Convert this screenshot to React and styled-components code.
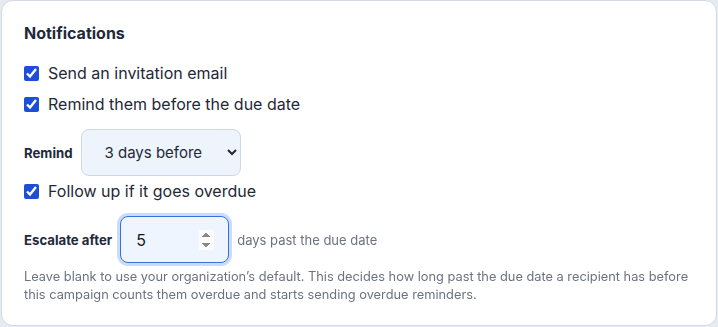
import React, { useState } from 'react';
import styled, { createGlobalStyle } from 'styled-components';

const Global = createGlobalStyle`
  html, body { margin: 0; padding: 0; background: #e6ebf2; }
  body { font-family: Inter, "Noto Sans", sans-serif; }
  * { box-sizing: border-box; }
`;

const Page = styled.div`
  width: 718px;
  height: 327px;
  padding: 0 1px 1px 1px;
`;

const Card = styled.section`
  height: 100%;
  background: #fff;
  border: 1px solid #d3dae5;
  border-radius: 12px;
  padding: 22px 22px 0 22px;
  display: flex;
  flex-direction: column;
`;

const Heading = styled.h2`
  margin: 0 0 18px 0;
  font-size: 16px;
  line-height: 20px;
  font-weight: 700;
  color: #1e293b;
`;

const CheckRow = styled.label`
  display: flex;
  align-items: center;
  gap: 9px;
  height: 24px;
  margin-top: ${p => p.$top || 0}px;
  font-size: 16px;
  color: #1f2937;
  cursor: pointer;
`;

const Check = styled.input.attrs({ type: 'checkbox' })`
  width: 15px;
  height: 15px;
  margin: 0;
  accent-color: #1d4ed8;
`;

const FieldRow = styled.div`
  display: flex;
  align-items: center;
  gap: 8px;
  margin-top: ${p => p.$top || 0}px;
`;

const FieldLabel = styled.label`
  font-size: 13.2px;
  font-weight: 700;
  color: #1e293b;
`;

const Select = styled.select`
  width: 160px;
  height: 47px;
  padding: 0 10px 0 19px;
  font-family: inherit;
  font-size: 15px;
  color: #1f2937;
  background: #eef4fc;
  border: 1px solid #cfd8e4;
  border-radius: 8px;
`;

const NumberInput = styled.input.attrs({ type: 'number' })`
  width: 109px;
  height: 47px;
  padding: 0 14px 0 15px;
  font-family: inherit;
  font-size: 16px;
  color: #111827;
  background: #eef5ff;
  border: 1.5px solid ${p => (p.$active ? '#3b6fd6' : '#cfd8e4')};
  border-radius: 8px;
  box-shadow: ${p => (p.$active ? '0 0 0 3px #c9dcfb' : 'none')};
  outline: none;
`;

const Suffix = styled.span`
  font-size: 13px;
  color: #6b7280;
`;

const Help = styled.p`
  margin: 5px 0 0 0;
  font-size: 12.8px;
  line-height: 18px;
  color: #6b7280;
`;

export default function App() {
  const [invite, setInvite] = useState(true);
  const [remind, setRemind] = useState(true);
  const [follow, setFollow] = useState(true);
  const [days, setDays] = useState('3');
  const [escalate, setEscalate] = useState('5');

  return (
    <Page>
      <Global />
      <Card>
        <Heading>Notifications</Heading>
        <CheckRow>
          <Check checked={invite} onChange={e => setInvite(e.target.checked)} />
          Send an invitation email
        </CheckRow>
        <CheckRow $top={7}>
          <Check checked={remind} onChange={e => setRemind(e.target.checked)} />
          Remind them before the due date
        </CheckRow>
        <FieldRow $top={13}>
          <FieldLabel htmlFor="remind">Remind</FieldLabel>
          <Select id="remind" value={days} onChange={e => setDays(e.target.value)}>
            <option value="1">1 day before</option>
            <option value="2">2 days before</option>
            <option value="3">3 days before</option>
            <option value="7">7 days before</option>
          </Select>
        </FieldRow>
        <CheckRow $top={3}>
          <Check checked={follow} onChange={e => setFollow(e.target.checked)} />
          Follow up if it goes overdue
        </CheckRow>
        <FieldRow $top={13}>
          <FieldLabel htmlFor="escalate">Escalate after</FieldLabel>
          <NumberInput
            id="escalate"
            $active
            autoFocus
            value={escalate}
            onChange={e => setEscalate(e.target.value)}
          />
          <Suffix>days past the due date</Suffix>
        </FieldRow>
        <Help>
          Leave blank to use your organization’s default. This decides how long past the due date a recipient has before
          this campaign counts them overdue and starts sending overdue reminders.
        </Help>
      </Card>
    </Page>
  );
}
